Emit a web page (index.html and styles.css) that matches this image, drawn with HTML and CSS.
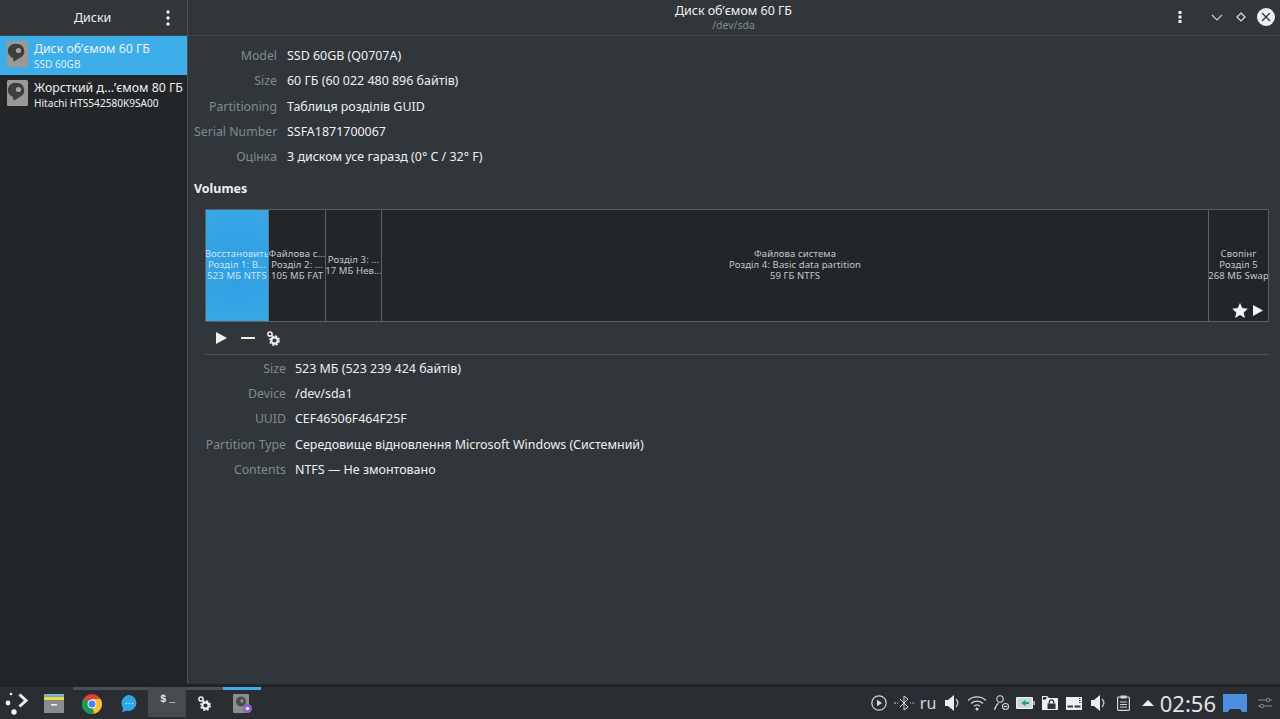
FILE: index.html
```html
<!DOCTYPE html>
<html lang="uk">
<head>
<meta charset="utf-8">
<title>Диски</title>
<link rel="stylesheet" href="styles.css">
</head>
<body>
<div class="app">
  <aside class="sidebar">
    <header class="side-head">
      <span class="side-title">Диски</span>
      <svg class="side-menu" width="4" height="16" viewBox="0 0 4 16"><circle cx="2" cy="2" r="1.7"/><circle cx="2" cy="8" r="1.7"/><circle cx="2" cy="14" r="1.7"/></svg>
    </header>
    <ul class="disk-list">
      <li class="disk selected">
        <svg class="disk-icon" width="21" height="26" viewBox="0 0 21 26"><rect width="21" height="26" rx="1.5" fill="#9b9896"/><path d="M10 3a7.200 7.200 0 0 1 3.500 13.500L7 20.500c-1-1-1.200-2.200-.8-3.500A7.200 7.200 0 0 1 10 3z" fill="#3c3e40"/><circle cx="11.500" cy="9.500" r="2.600" fill="#a5a3a1"/></svg>
        <div class="disk-text"><div class="disk-name">Диск об’ємом 60 ГБ</div><div class="disk-sub">SSD 60GB</div></div>
      </li>
      <li class="disk">
        <svg class="disk-icon" width="21" height="26" viewBox="0 0 21 26"><rect width="21" height="26" rx="1.500" fill="#9b9896"/><path d="M10 3a7.200 7.200 0 0 1 3.500 13.500L7 20.500c-1-1-1.200-2.200-.8-3.500A7.200 7.200 0 0 1 10 3z" fill="#3c3e40"/><circle cx="11.500" cy="9.500" r="2.600" fill="#a5a3a1"/></svg>
        <div class="disk-text"><div class="disk-name">Жорсткий д...’ємом 80 ГБ</div><div class="disk-sub">Hitachi HTS542580K9SA00</div></div>
      </li>
    </ul>
  </aside>
  <main class="main">
    <header class="main-head">
      <div class="head-title"><div class="title">Диск об’ємом 60 ГБ</div><div class="subtitle">/dev/sda</div></div>
      <div class="win-buttons">
        <svg class="menu-dots" width="4" height="12" viewBox="0 0 4 12"><rect x=".5" y="0" width="3" height="3"/><rect x=".5" y="4.500" width="3" height="3"/><rect x=".5" y="9" width="3" height="3"/></svg>
        <svg class="win-chevron" width="12" height="7" viewBox="0 0 12 7"><path d="M1 1l5 5 5-5" fill="none" stroke="#c8cacb" stroke-width="1.200"/></svg>
        <svg class="win-diamond" width="10" height="10" viewBox="0 0 10 10"><path d="M5 1l4 4-4 4-4-4z" fill="none" stroke="#e0e1e2" stroke-width="1.200"/></svg>
        <span class="win-close"><svg width="10" height="10" viewBox="0 0 10 10"><path d="M1 1l8 8M9 1l-8 8" stroke="#31363b" stroke-width="1.300"/></svg></span>
      </div>
    </header>
    <section class="content">
      <dl class="form form-disk">
        <dt>Model</dt><dd>SSD 60GB (Q0707A)</dd>
        <dt>Size</dt><dd>60 ГБ (60 022 480 896 байтів)</dd>
        <dt>Partitioning</dt><dd>Таблиця розділів GUID</dd>
        <dt>Serial Number</dt><dd>SSFA1871700067</dd>
        <dt>Оцінка</dt><dd>З диском усе гаразд (0° C / 32° F)</dd>
      </dl>
      <h2 class="volumes-title">Volumes</h2>
      <div class="volumes">
        <div class="bar">
          <div class="part part-selected p1"><span>Восстановить</span><span>Розділ 1: В...</span><span>523 МБ NTFS</span></div>
          <div class="part p2"><span>Файлова с...</span><span>Розділ 2: ...</span><span>105 МБ FAT</span></div>
          <div class="part p3"><span>Розділ 3: ...</span><span>17 МБ Нев...</span></div>
          <div class="part p4"><span>Файлова система</span><span>Розділ 4: Basic data partition</span><span>59 ГБ NTFS</span></div>
          <div class="part p5"><span>Свопінг</span><span>Розділ 5</span><span>268 МБ Swap</span>
            <div class="badges">
              <svg width="16" height="15" viewBox="0 0 16 15"><path d="M8 0l2.300 5.100 5.500.6-4.100 3.700 1.200 5.500L8 12.100l-4.900 2.800 1.200-5.500L.2 5.700l5.500-.6z" fill="#f4f5f5"/></svg>
              <svg width="10" height="11" viewBox="0 0 10 11"><path d="M0 0l10 5.500L0 11z" fill="#f4f5f5"/></svg>
            </div>
          </div>
        </div>
        <div class="tools">
          <svg width="11" height="12" viewBox="0 0 11 12"><path d="M0 0l11 6-11 6z" fill="#eff0f1"/></svg>
          <svg width="14" height="2" viewBox="0 0 14 2"><rect width="14" height="2" fill="#eff0f1"/></svg>
          <svg width="13" height="15" viewBox="0 0 13 15"><circle cx="3" cy="3" r="2.100" fill="none" stroke="#eff0f1" stroke-width="1.500"/><circle cx="7.500" cy="9.500" r="3.200" fill="none" stroke="#eff0f1" stroke-width="2.200"/><circle cx="7.500" cy="9.500" r="4.700" fill="none" stroke="#eff0f1" stroke-width="1.400" stroke-dasharray="2.200 1.500"/></svg>
        </div>
        <div class="sep"></div>
        <dl class="form form-part">
          <dt>Size</dt><dd>523 МБ (523 239 424 байтів)</dd>
          <dt>Device</dt><dd>/dev/sda1</dd>
          <dt>UUID</dt><dd>CEF46506F464F25F</dd>
          <dt>Partition Type</dt><dd>Середовище відновлення Microsoft Windows (Системний)</dd>
          <dt>Contents</dt><dd>NTFS — Не змонтовано</dd>
        </dl>
      </div>
    </section>
  </main>
</div>
<footer class="panel">
  <svg class="launcher" width="24" height="24" viewBox="0 0 24 24"><path d="M14.500 3.500l6.500 6-6.500 6" fill="none" stroke="#f2f3f3" stroke-width="3"/><circle cx="6" cy="3" r="1.300" fill="#f2f3f3"/><circle cx="3" cy="12" r="2.400" fill="#f2f3f3"/><circle cx="9" cy="21" r="2.700" fill="#f2f3f3"/></svg>
  <div class="tasks">
    <div class="task">
      <svg width="20" height="19" viewBox="0 0 20 19"><rect width="20" height="2.500" fill="#7cb5de"/><rect y="2.500" width="20" height="4" fill="#e8d75c"/><rect y="6.500" width="20" height="12.500" fill="#8b8c8d"/><rect x="7" y="10" width="6" height="1.600" fill="#eee"/></svg>
    </div>
    <div class="task running">
      <svg width="20" height="20" viewBox="0 0 20 20"><circle cx="10" cy="10" r="10" fill="#db4437"/><path d="M10 10L1.340 15A10 10 0 0 0 12 19.800z" fill="#0f9d58"/><path d="M10 5h8.660a10 10 0 0 1-6.660 14.800L10 10z" fill="#fbc02d"/><path d="M10 10L1.340 15A10 10 0 0 1 1.340 5z" fill="#0f9d58"/><circle cx="10" cy="10" r="4.500" fill="#fff"/><circle cx="10" cy="10" r="3.500" fill="#4285f4"/></svg>
    </div>
    <div class="task running">
      <svg width="17" height="17" viewBox="0 0 17 17"><path d="M8.500 0a8 8 0 1 1-2.500 15.800L1 17l1-4A8.300 8.300 0 0 1 8.500 0z" fill="#2fa6e8"/><circle cx="5.500" cy="8.500" r=".8" fill="#bfe6fb"/><circle cx="8.500" cy="8.500" r=".8" fill="#bfe6fb"/><circle cx="11.500" cy="8.500" r=".8" fill="#bfe6fb"/></svg>
    </div>
    <div class="task active">
      <span class="term-text">$ _</span>
    </div>
    <div class="task running">
      <svg width="13" height="15" viewBox="0 0 13 15"><circle cx="3" cy="3" r="2.100" fill="none" stroke="#eff0f1" stroke-width="1.500"/><circle cx="7.500" cy="9.500" r="3.200" fill="none" stroke="#eff0f1" stroke-width="2.200"/><circle cx="7.500" cy="9.500" r="4.700" fill="none" stroke="#eff0f1" stroke-width="1.400" stroke-dasharray="2.200 1.500"/></svg>
    </div>
    <div class="task focused">
      <svg width="21" height="20" viewBox="0 0 21 20"><rect x="1" width="16" height="19" rx="1" fill="#8f8d8b"/><circle cx="9" cy="7.500" r="5" fill="#4a4c4e"/><circle cx="10" cy="7" r="1.800" fill="#8f8d8b"/><circle cx="15.500" cy="14.500" r="4.500" fill="#8a63c9"/><circle cx="15.500" cy="14.500" r="1.800" fill="#eee"/></svg>
    </div>
  </div>
  <div class="tray">
    <span class="tray-item"><svg width="16" height="16" viewBox="0 0 16 16"><circle cx="8" cy="8" r="7.200" fill="none" stroke="#d5d7d8" stroke-width="1.200"/><path d="M6 4.800l5 3.200-5 3.200z" fill="#d5d7d8"/></svg></span>
    <span class="tray-item"><svg width="22" height="16" viewBox="0 0 22 16"><path d="M7 4l8 8-4 3V1l4 3-8 8" fill="none" stroke="#d5d7d8" stroke-width="1"/><path d="M1 8h2M4 8h1M17 8h1M19.500 8h1.500" stroke="#d5d7d8"/></svg></span>
    <span class="tray-item lang">ru</span>
    <span class="tray-item"><svg width="15" height="16" viewBox="0 0 15 16"><path d="M0 5h3l6-5v16l-6-5H0z" fill="#eceded"/><path d="M11 4a5.500 5.500 0 0 1 0 8" fill="none" stroke="#bfc1c2" stroke-width="1.500"/></svg></span>
    <span class="tray-item"><svg width="20" height="16" viewBox="0 0 20 16"><g fill="none" stroke="#d5d7d8" stroke-width="1.200"><path d="M1 5.500a13 13 0 0 1 18 0"/><path d="M4 8.500a9 9 0 0 1 12 0"/><path d="M7 11.300a4.500 4.500 0 0 1 6 0"/></g><circle cx="10" cy="14" r="1.500" fill="#d5d7d8"/></svg></span>
    <span class="tray-item"><svg width="15" height="16" viewBox="0 0 15 16"><g fill="none" stroke="#d5d7d8" stroke-width="1.100"><circle cx="6" cy="4" r="3.200"/><path d="M.6 15c.5-3 2-5.500 4-6.800"/><circle cx="11.500" cy="11.500" r="3"/><path d="M10 11.500h3"/></g></svg></span>
    <span class="tray-item"><svg width="19" height="12" viewBox="0 0 19 12"><rect width="17" height="12" rx="1" fill="#eceded"/><rect x="17" y="4" width="2" height="4" fill="#a9abac"/><rect x="1.500" y="1.500" width="14" height="9" fill="#c9d6d3"/><path d="M5.500 6L9.500 2.800V5H13v2H9.500v2.200z" fill="#17a583"/></svg></span>
    <span class="tray-item"><svg width="16" height="14" viewBox="0 0 16 14"><path d="M0 3.500V0h5l2 2h9v12H0z" fill="#f2f3f3"/><path d="M1 1h3.500v2L1 4z" fill="#31363b"/><rect x="5.500" y="7.500" width="8" height="5.500" fill="#31363b"/><path d="M7.300 7.500V6a2.200 2.200 0 0 1 4.400 0v1.500" fill="none" stroke="#31363b" stroke-width="1.300"/></svg></span>
    <span class="tray-item"><svg width="16" height="13" viewBox="0 0 16 13"><rect width="16" height="13" fill="#eff0f1"/><rect x="1.500" y="8.500" width="5.500" height="2" fill="#31363b"/><rect x="8.500" y="8.500" width="6" height="2" fill="#31363b"/><path d="M13 1.500h1.500M13 3.500h1.500M13 5.500h1.500" stroke="#31363b"/></svg></span>
    <span class="tray-item"><svg width="15" height="16" viewBox="0 0 15 16"><path d="M0 5h3l6-5v16l-6-5H0z" fill="#eceded"/><path d="M11 4a5.500 5.500 0 0 1 0 8" fill="none" stroke="#bfc1c2" stroke-width="1.500"/></svg></span>
    <span class="tray-item"><svg width="13" height="16" viewBox="0 0 13 16"><rect x=".6" y="2" width="11.800" height="13.400" rx="1" fill="none" stroke="#d5d7d8" stroke-width="1.200"/><rect x="3.500" y=".5" width="6" height="3" fill="#d5d7d8"/><path d="M3 7h7M3 9.500h7M3 12h7" stroke="#d5d7d8"/></svg></span>
    <span class="tray-item"><svg width="12" height="6" viewBox="0 0 12 6"><path d="M6 0l6 6H0z" fill="#eceded"/></svg></span>
    <span class="clock">02:56</span>
    <svg class="desk" width="24" height="18" viewBox="0 0 24 18"><path d="M0 0h24v18h-5l-2-3H7l-2 3H0z" fill="#4b8fe2"/></svg>
    <svg class="sliders" width="14" height="14" viewBox="0 0 14 14"><g fill="none" stroke="#8a8d90"><path d="M0 4h8M12 4h2M0 10h2M6 10h8"/><circle cx="10" cy="4" r="1.800"/><circle cx="4" cy="10" r="1.800"/></g></svg>
  </div>
</footer>
</body>
</html>
```

FILE: styles.css
```css
* { box-sizing: border-box; }
html, body { margin: 0; height: 100%; }
body {
  width: 1280px;
  height: 719px;
  overflow: hidden;
  display: flex;
  flex-direction: column;
  background: #31363b;
  color: #eff0f1;
  font-family: "Noto Sans", sans-serif;
  font-size: 12.450px;
  line-height: 16px;
}
.app { flex: 1; display: flex; min-height: 0; }

.sidebar {
  width: 188px;
  flex: none;
  background: #232629;
  border-right: 1px solid #4d5155;
  display: flex;
  flex-direction: column;
}
.side-head {
  height: 36px;
  flex: none;
  background: #31363b;
  border-bottom: 1px solid #43474c;
  display: flex;
  align-items: center;
  padding: 0 17px 0 74px;
  justify-content: space-between;
}
.side-title { color: #eff0f1; }
.side-menu { fill: #eff0f1; }
.disk-list { list-style: none; margin: 0; padding: 0; }
.disk {
  height: 39px;
  display: flex;
  align-items: flex-start;
  padding: 5px 0 0 7px;
  gap: 6px;
}
.disk.selected { background: #3daee9; }
.disk-text { white-space: nowrap; }
.disk-name { font-size: 12.300px; line-height: 15px; }
.disk-sub { font-size: 10.100px; line-height: 13px; margin-top: 2px; }
.disk.selected .disk-sub { color: #dbeefb; }

.main { flex: 1; min-width: 0; display: flex; flex-direction: column; }
.main-head {
  height: 36px;
  flex: none;
  border-bottom: 1px solid #43474c;
  position: relative;
  display: flex;
  justify-content: center;
}
.head-title { text-align: center; padding-top: 3px; padding-right: 1px; }
.title { line-height: 15px; }
.subtitle { font-size: 10.500px; line-height: 15px; color: #7f8c8d; }
.win-buttons {
  position: absolute;
  right: 5px;
  top: 8px;
  display: flex;
  align-items: center;
}
.menu-dots { fill: #eff0f1; margin-right: 29px; }
.win-chevron { margin-right: 13px; }
.win-diamond { margin-right: 11px; }
.win-close {
  width: 18px;
  height: 18px;
  border-radius: 50%;
  background: #eff0f1;
  display: flex;
  align-items: center;
  justify-content: center;
}

.content { padding: 7.300px 11px 0 6px; }
.form {
  display: grid;
  margin: 0;
  grid-auto-rows: 25.300px;
  column-gap: 10px;
  align-items: center;
}
.form-disk { grid-template-columns: 83px 1fr; }
.form-part { grid-template-columns: 81px 1fr; column-gap: 9px; margin-top: .7px; }
.form dt { text-align: right; color: #7f8c8d; white-space: nowrap; font-size: 12.300px; }
.form dd { margin: 0; }
.volumes-title { font-size: 12.450px; line-height: 16px; font-weight: 700; margin: 11.700px 0 12px; }
.volumes { padding-left: 11px; }
.bar {
  display: flex;
  height: 113px;
  border: 1px solid #5b5f63;
  background: #232629;
  font-size: 9.500px;
  line-height: 11px;
}
.part {
  display: flex;
  flex-direction: column;
  align-items: center;
  justify-content: center;
  text-align: center;
  white-space: nowrap;
  overflow: hidden;
  color: #c5c7c8;
  border-right: 1px solid #5b5f63;
  letter-spacing: .1px;
  position: relative;
  padding-bottom: 2px;
}
.part:last-child { border-right: 0; }
.part-selected {
  background: radial-gradient(circle at center, #2f9de0 0%, #3aa8e6 100%);
  color: #c9e6f7;
  border-right: 1px solid #5b7e95;
}
.p1 { width: 63px; }
.p2 { width: 57px; }
.p3 { width: 56px; }
.p4 { flex: 1; }
.p5 { width: 59px; }
.badges {
  position: absolute;
  right: 5px;
  bottom: 3px;
  display: flex;
  align-items: center;
  gap: 5px;
}
.tools { height: 32px; display: flex; align-items: center; padding-left: 11px; }
.tools svg:nth-child(1) { margin-right: 14px; }
.tools svg:nth-child(2) { margin-right: 12px; }
.sep { height: 1px; background: #4d5155; }

.panel {
  height: 35px;
  flex: none;
  background: #2a2e32;
  border-top: 3px solid #212427;
  display: flex;
  align-items: center;
  padding-right: 8px;
}
.launcher { margin: 0 0 0 5px; }
.tasks { display: flex; height: 32px; padding-bottom: 2px; margin-left: 6.500px; }
.task {
  width: 37.600px;
  display: flex;
  align-items: center;
  justify-content: center;
  border-top: 3px solid transparent;
}
.task.running { border-top-color: #4b5055; }
.task.active { background: #474b50; border-top-color: #474b50; }
.task.focused { border-top-color: #3daee9; }
.term-text { font-family: "Liberation Mono", monospace; font-size: 10px; font-weight: 700; letter-spacing: -1.500px; color: #eff0f1; margin-top: -8px; }
.tray { margin-left: auto; display: flex; align-items: center; }
.tray-item { width: 24.400px; display: flex; justify-content: center; align-items: center; }
.lang { font-size: 16px; color: #d5d7d8; }
.clock { font-size: 22px; line-height: 24px; color: #e2e4e5; margin: 0 7px 0 0; }
.desk { margin-right: 11px; }
```
